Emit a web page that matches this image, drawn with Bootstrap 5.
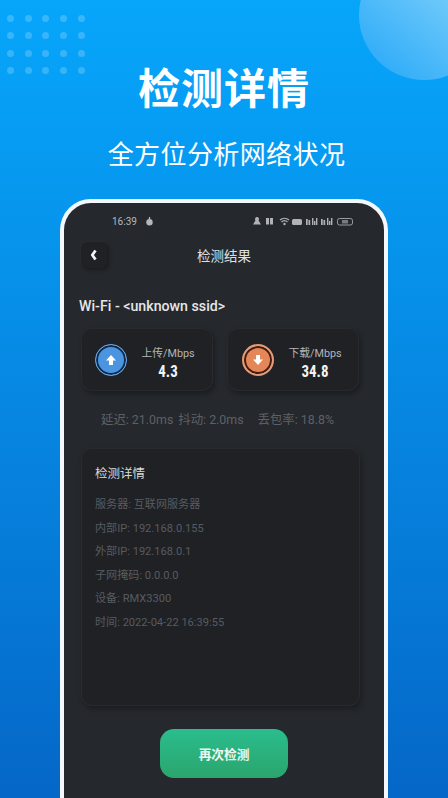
<!DOCTYPE html>
<html lang="zh">
<head>
<meta charset="utf-8">
<title>检测详情</title>
<link href="https://cdn.jsdelivr.net/npm/bootstrap@5.3.0/dist/css/bootstrap.min.css" rel="stylesheet">
<style>
html,body{height:798px;overflow:hidden;margin:0}
body{font-family:Roboto,"Noto Sans CJK SC",sans-serif;background:#fff}
.poster{width:448px;height:798px;position:relative;overflow:hidden;background:linear-gradient(180deg,#07a6fb 0%,#0697ef 25%,#0680dc 62%,#0567c8 100%);color:#fff}
.orb{position:absolute;left:359px;top:-50px;width:130px;height:130px;border-radius:50%;background:linear-gradient(40deg,#28a9f8 5%,#8cd6fb 90%)}
.dotfield{position:absolute;left:7px;top:15px;display:grid;grid-template-columns:repeat(5,7px);column-gap:10.7px;row-gap:10.3px}
.dotfield i{display:block;width:7px;height:7px;border-radius:50%;background:rgba(255,255,255,.2)}
.headline{font-family:"Noto Sans CJK SC",sans-serif;font-weight:700;font-size:42px;line-height:50px;padding-top:61px;letter-spacing:1px;text-align:center}
.subline{font-family:"Noto Sans CJK SC",sans-serif;font-size:26px;line-height:34px;margin-top:25px;letter-spacing:.4px;text-align:center;padding-left:5px}
.handset{width:328px;height:640px;margin:29px 0 0 60px;border:4px solid #f4f8fc;border-bottom:0;border-radius:31px 31px 0 0;background:#25282d;padding:0 17px;box-sizing:border-box}
.statusrow{height:37px;padding:0 6px 0 31px;font-size:10px;color:#b5b7ba}
.statusrow svg{display:block}
.titlerow{height:26px;margin-top:2px;position:relative}
.backbtn{width:26px;height:26px;border-radius:6px;background:#1f2125;box-shadow:2px 2px 4px rgba(0,0,0,.35),-1px -1px 2px rgba(255,255,255,.03)}
.toptitle{position:absolute;left:0;right:0;top:0;text-align:center;font-size:13.5px;line-height:28px;color:#dfe0e2}
.netname{font-size:14.2px;font-weight:500;line-height:18px;margin:29px 0 0 -2px;color:#e5e6e7}
.tiles{margin-top:13px;gap:14px}
.tile{width:132px;height:63px;border-radius:11px;background:#1f2125;box-shadow:2px 3px 5px rgba(0,0,0,.3),inset 0 0 0 1px rgba(255,255,255,.045)}
.tile-a{padding-left:14px}
.tile-b{padding-left:15px}
.ring{width:32px;height:32px;border-radius:50%;flex:none}
.ring-blue{border:1px solid #6aa5e2;background:#4b95e0;box-shadow:inset 0 0 0 2px #0f2a4a}
.ring-orange{border:2px solid #e49a78;background:#e58658;box-shadow:inset 0 0 0 2px #3f1d10}
.tiletext{width:76px;text-align:center;margin-left:3px;padding-top:9px}
.tilelabel{font-size:10.8px;line-height:13px;color:#b3b5b8;white-space:nowrap}
.tilevalue{font-family:"Liberation Sans Narrow","Roboto Condensed",Roboto,sans-serif;font-weight:700;font-size:17px;line-height:22px;color:#f3f3f3;transform:scaleX(.88)}
.metrics{font-size:12.4px;line-height:16px;color:#5d6167;margin-top:21px;white-space:nowrap;padding-left:20px}
.metrics span+span{margin-left:5px}
.metrics span:last-child{margin-left:14px}
.detailbox{width:279px;height:258px;margin-top:20px;border-radius:11px;background:#1f2125;box-shadow:2px 3px 6px rgba(0,0,0,.3),inset 0 0 0 1px rgba(255,255,255,.045);padding:17px 14px}
.detailhead{font-size:12.5px;line-height:17px;color:#d8d9db}
.detailrows{margin-top:16px;display:flex;flex-direction:column;gap:9.6px}
.detailrows div{font-size:11.1px;line-height:14px;color:#585b60}
.againbtn{display:block;width:128px;height:49px;margin:23px auto 0;padding:2px 0 0;border:0;border-radius:14px;background:linear-gradient(180deg,#2abd8d,#2ba56d);color:#f1f7f3;font-size:12.7px;font-weight:700}
</style>
</head>
<body>
<div class="poster">
  <div class="orb"></div>
  <div class="dotfield">
    <i></i><i></i><i></i><i></i><i></i>
    <i></i><i></i><i></i><i></i><i></i>
    <i></i><i></i><i></i><i></i><i></i>
    <i></i><i></i><i></i><i></i><i></i>
  </div>
  <div class="headline">检测详情</div>
  <div class="subline">全方位分析网络状况</div>
  <div class="handset">
    <div class="statusrow d-flex justify-content-between align-items-center">
      <div class="d-flex align-items-center gap-2">
        <span>16:39</span>
        <svg width="9" height="9" viewBox="0 0 9 9"><path d="M4.500 0v3" stroke="#b5b7ba" stroke-width="1.300"/><circle cx="4.500" cy="5.300" r="3.200" fill="#b5b7ba"/></svg>
      </div>
      <svg width="108" height="9" viewBox="0 0 108 9" fill="#b0b2b5">
        <path d="M4 0a2 2 0 0 1 1.500 3.300L8 7.500H0L2.500 3.300A2 2 0 0 1 4 0z"/>
        <path d="M13 1h3v6.500h-3zM17 1h3v6.500h-3z"/>
        <path d="M27 3a7 7 0 0 1 9 0M28.500 5a4.500 4.500 0 0 1 6 0" fill="none" stroke="#b0b2b5" stroke-width="1.300"/><circle cx="31.500" cy="7" r="1.200"/>
        <rect x="39" y="2" width="10" height="6" rx="1.500"/>
        <path d="M53 2h1.700v6H53zM55.500 3h1.700v5h-1.700zM59 1h1.400v7H59zM61 4h1.400v4H61zM63 1h1.400v7H63z"/>
        <path d="M68 2h1.700v6H68zM70.500 3h1.700v5h-1.700zM74 1h1.400v7H74zM76 4h1.400v4H76zM78 1h1.400v7H78z"/>
        <rect x="84.500" y="1.500" width="15" height="6.500" rx="2" fill="none" stroke="#9a9ca0"/>
        <path d="M89 3h6v3.500h-6z" opacity=".6"/>
      </svg>
    </div>
    <div class="titlerow">
      <div class="backbtn d-flex align-items-center justify-content-center">
        <svg width="8" height="12" viewBox="0 0 8 12"><path d="M5.500 1.500 2.300 6l3.200 4.500" fill="none" stroke="#f4f4f4" stroke-width="2.800" stroke-linejoin="round"/></svg>
      </div>
      <div class="toptitle">检测结果</div>
    </div>
    <div class="netname">Wi-Fi - &lt;unknown ssid&gt;</div>
    <div class="tiles d-flex">
      <div class="tile tile-a d-flex align-items-center">
        <div class="ring ring-blue d-flex align-items-center justify-content-center">
          <svg width="12" height="12" viewBox="0 0 12 12"><path d="M6 1 11 6.500H8V11H4V6.500H1z" fill="#fff"/></svg>
        </div>
        <div class="tiletext">
          <div class="tilelabel">上传/Mbps</div>
          <div class="tilevalue">4.3</div>
        </div>
      </div>
      <div class="tile tile-b d-flex align-items-center">
        <div class="ring ring-orange d-flex align-items-center justify-content-center">
          <svg width="12" height="12" viewBox="0 0 12 12"><path d="M6 11 1 5.500H4V1h4v4.500h3z" fill="#fff"/></svg>
        </div>
        <div class="tiletext">
          <div class="tilelabel">下载/Mbps</div>
          <div class="tilevalue">34.8</div>
        </div>
      </div>
    </div>
    <div class="metrics"><span>延迟: 21.0ms</span><span>抖动: 2.0ms</span><span>丢包率: 18.8%</span></div>
    <div class="detailbox">
      <div class="detailhead">检测详情</div>
      <div class="detailrows">
        <div>服务器: 互联网服务器</div>
        <div>内部IP: 192.168.0.155</div>
        <div>外部IP: 192.168.0.1</div>
        <div>子网掩码: 0.0.0.0</div>
        <div>设备: RMX3300</div>
        <div>时间: 2022-04-22 16:39:55</div>
      </div>
    </div>
    <button type="button" class="btn againbtn">再次检测</button>
  </div>
</div>
<script src="https://cdn.jsdelivr.net/npm/bootstrap@5.3.0/dist/js/bootstrap.bundle.min.js"></script>
</body>
</html>
